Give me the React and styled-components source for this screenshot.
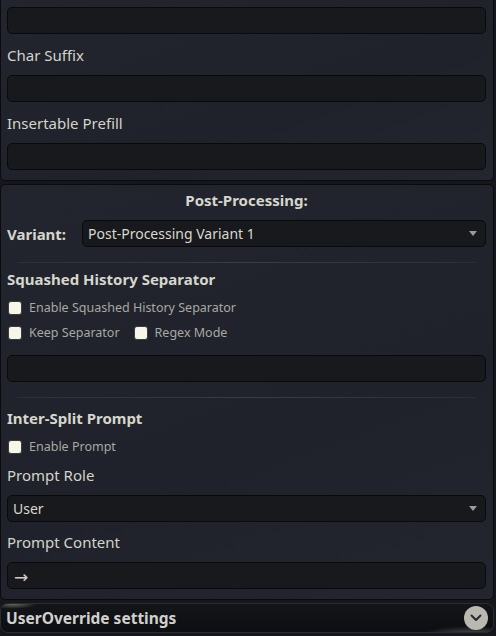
import React from 'react';
import styled, { createGlobalStyle } from 'styled-components';

const GlobalStyle = createGlobalStyle`
  html, body {
    margin: 0;
    padding: 0;
    background: #16171c;
    overflow: hidden;
  }
  body {
    font-family: "Noto Sans", "Open Sans", sans-serif;
    color: #d6d6cc;
  }
`;

const Page = styled.div`
  width: 496px;
  height: 636px;
  display: flex;
  flex-direction: column;
  gap: 3px;
`;

const Panel = styled.div`
  width: 494px;
  box-sizing: border-box;
  background: linear-gradient(160deg, #22252e 0%, #1f222a 60%, #23262e 100%);
  border: 1px solid #0b0b0e;
  border-top: ${p => (p.$cut ? 'none' : '1px solid #0b0b0e')};
  border-radius: ${p => (p.$cut ? '0 0 5px 5px' : '5px')};
  padding: ${p => (p.$cut ? '7px 7px 10px 6px' : '5px 7px 10px 6px')};
  display: flex;
  flex-direction: column;
`;

const Label = styled.div`
  font-size: 15px;
  line-height: 20px;
  padding: ${p => p.$pt ?? 11}px 0 10px 0;
  color: #d4d4ca;
`;

const Field = styled.div`
  height: 27px;
  box-sizing: border-box;
  background: #18191d;
  border: 1px solid #0a0a0c;
  border-radius: 5px;
  display: flex;
  align-items: center;
  padding: 0 8px 0 5px;
  font-size: 14px;
  color: #d8d8ce;
  flex: ${p => (p.$grow ? 1 : 'none')};
`;

const ArrowText = styled.span`
  font-family: "DejaVu Sans", sans-serif;
  font-size: 17px;
  line-height: 1;
  padding-top: 3px;
  padding-left: 1px;
  color: #cfcfc6;
`;

const Arrow = styled.span`
  margin-left: auto;
  width: 0;
  height: 0;
  border-left: 4px solid transparent;
  border-right: 4px solid transparent;
  border-top: 5px solid #9a9a96;
`;

const Title = styled.div`
  text-align: center;
  font-weight: 700;
  font-size: 15px;
  line-height: 20px;
  padding: 0 0 10px;
  color: #d6d6cc;
`;

const Row = styled.div`
  display: flex;
  align-items: center;
  gap: 15px;
`;

const RowLabel = styled.div`
  font-weight: 700;
  font-size: 15px;
  width: 60px;
`;

const Divider = styled.div`
  height: 1px;
  margin: 15px 10px 0;
  background: linear-gradient(90deg, rgba(90, 92, 100, 0.2), #3a3c44 50%, rgba(90, 92, 100, 0.2));
`;

const Heading = styled.div`
  font-weight: 700;
  font-size: 15px;
  line-height: 20px;
  padding: ${p => p.$pt ?? 6}px 0 6px 0;
`;

const Checks = styled.div`
  display: flex;
  gap: 14px;
  padding: 3px 0 3px 1px;
`;

const Check = styled.label`
  display: flex;
  align-items: center;
  gap: 7px;
  font-size: 12.5px;
  line-height: 19px;
  color: #a8a8a2;
`;

const Box = styled.span`
  width: 14px;
  height: 14px;
  box-sizing: border-box;
  background: #f6f6ea;
  border: 1px solid #3c3c38;
  border-radius: 3px;
`;

const Footer = styled.div`
  width: 494px;
  height: 30px;
  box-sizing: border-box;
  border: 1px solid #2a2c33;
  border-radius: 8px;
  background:
    radial-gradient(ellipse 30px 6px at 12px 0px, rgba(200, 200, 170, 0.45), transparent 80%),
    radial-gradient(ellipse 60px 10px at 470px 30px, rgba(190, 190, 190, 0.35), transparent 80%),
    linear-gradient(180deg, #141519 0%, #0d0e11 100%);
  display: flex;
  align-items: center;
  padding: 0 5px 0 5px;
  font-weight: 700;
  font-size: 15.5px;
  color: #d0d0cc;
`;

const Chevron = styled.span`
  margin-left: auto;
  width: 24px;
  height: 24px;
  border-radius: 50%;
  background: #b9b9b2;
  display: flex;
  align-items: center;
  justify-content: center;
`;

const Spacer = styled.div`
  height: ${p => p.$h}px;
`;

export default function App() {
  return (
    <Page>
      <GlobalStyle />
      <Panel $cut>
        <Field />
        <Label>Char Suffix</Label>
        <Field />
        <Label>Insertable Prefill</Label>
        <Field />
      </Panel>
      <Panel>
        <Title>Post-Processing:</Title>
        <Row>
          <RowLabel>Variant:</RowLabel>
          <Field $grow>
            Post-Processing Variant 1
            <Arrow />
          </Field>
        </Row>
        <Divider />
        <Heading>Squashed History Separator</Heading>
        <Checks>
          <Check><Box />Enable Squashed History Separator</Check>
        </Checks>
        <Checks>
          <Check><Box />Keep Separator</Check>
          <Check><Box />Regex Mode</Check>
        </Checks>
        <Spacer $h={10} />
        <Field />
        <Divider />
        <Heading $pt={10}>Inter-Split Prompt</Heading>
        <Checks>
          <Check><Box />Enable Prompt</Check>
        </Checks>
        <Label $pt={6}>Prompt Role</Label>
        <Field>
          User
          <Arrow />
        </Field>
        <Label $pt={10}>Prompt Content</Label>
        <Field><ArrowText>→</ArrowText></Field>
      </Panel>
      <Footer>
        UserOverride settings
        <Chevron>
          <svg width="12" height="8" viewBox="0 0 12 8">
            <path d="M1.5 1.5 L6 6 L10.5 1.5" fill="none" stroke="#2a2a2a" strokeWidth="2" strokeLinecap="round" strokeLinejoin="round" />
          </svg>
        </Chevron>
      </Footer>
    </Page>
  );
}
